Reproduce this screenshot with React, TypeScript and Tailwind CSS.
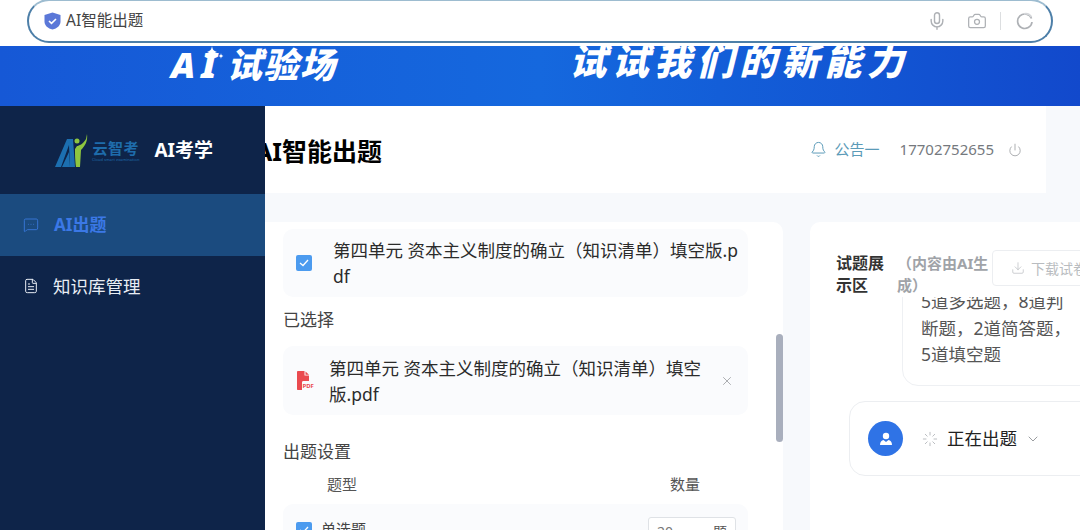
import React from 'react';
import { Bell, ChevronDown, Download, FileText, Loader, Mic, Camera, MessageSquareMore, Power, X } from 'lucide-react';

const FILE_NAME = '第四单元 资本主义制度的确立（知识清单）填空版.pdf';

const ShieldIcon = () => (
  <svg width="17" height="18" viewBox="0 0 17 18">
    <path fill="#5b78d8" d="M8.5 0.5 16.5 3v6.5c0 4-3.4 7-8 8-4.600-1-8-4-8-8V3z" />
    <path fill="none" stroke="#fff" strokeWidth="1.6" d="M5 9l2.500 2.400L12 7" />
  </svg>
);

const ReloadIcon = () => (
  <svg width="18" height="18" viewBox="0 0 18 18" fill="none" stroke="#aeb1b5" strokeWidth="1.700">
    <path d="M15.500 6.500A7.200 7.200 0 1 0 16 10" />
    <path d="M8 1.800c3-.6 6 .6 7.500 3.200" stroke="#d5d7da" />
  </svg>
);

const Sparkle = () => (
  <svg width="24" height="20" viewBox="0 0 24 20" fill="#fff" className="absolute left-[33px] top-[3px]">
    <path d="M8 0c.6 3.600 1.500 4.800 5 6-3.500 1.200-4.400 2.400-5 6-.6-3.600-1.500-4.800-5-6 3.500-1.200 4.400-2.400 5-6z" />
    <path d="M17 7c.3 1.800.7 2.500 2.400 3-1.700.5-2.100 1.200-2.400 3-.3-1.800-.7-2.500-2.400-3 1.700-.5 2.100-1.200 2.400-3z" />
  </svg>
);

const Logo = () => (
  <div className="flex items-center">
    <svg width="36" height="36" viewBox="0 0 36 36" fill="none">
      <path fill="#1c6fb0" d="M0 34 12 6h6l2 28h-5l-1-22-8 22z" />
      <path fill="#1c6fb0" d="M7 34l7-15 1 15z" />
      <path fill="#8ec63f" d="M21 34c-1-8-1-13-1-18l2-3c2 0 6-2 9-7l1-5c1 7-2 12-6 16l-1 17z" />
      <circle cx="22" cy="8" r="2.500" fill="#8ec63f" />
    </svg>
    <div className="ml-px flex flex-col items-center">
      <span className="text-[15px] leading-[18px] font-bold tracking-[0.5px] text-[#1e6cab]">云智考</span>
      <span className="text-[4px] leading-[5px] text-[#1e6cab]">Cloud smart examination</span>
    </div>
  </div>
);

const Checkbox = () => (
  <span className="flex h-[16px] w-[16px] shrink-0 items-center justify-center rounded-[2px] bg-[#4c9bef]">
    <svg width="10" height="8" viewBox="0 0 10 8" fill="none" stroke="#fff" strokeWidth="1.300">
      <path d="M1 4l3 2.500L9 1" />
    </svg>
  </span>
);

const PdfIcon = () => (
  <svg width="19" height="20" viewBox="0 0 19 20" className="shrink-0">
    <path fill="#ea4a4f" d="M0 1c0-.5.4-1 1-1h6.500v4.500H12V10H6.500C5.500 10 5 10.500 5 11.500V19H1c-.6 0-1-.4-1-1z" />
    <path fill="#ea4a4f" d="M8.500 0.500 12 3.800H8.500z" />
    <text x="5.500" y="17" fontSize="6" fontWeight="700" fill="#ea4a4f">PDF</text>
  </svg>
);

const Sidebar = () => (
  <aside className="relative z-10 flex w-[265px] shrink-0 flex-col bg-[#0e2449]">
    <div className="flex h-[88px] shrink-0 items-center pl-[55px] pt-[1px]">
      <Logo />
      <span className="ml-[15px] text-[19px] font-bold text-white">AI考学</span>
    </div>
    <div className="flex h-[62px] shrink-0 items-center gap-[15px] bg-[#1b4b7f] pl-[23px]">
      <MessageSquareMore size={16} strokeWidth={1.300} className="text-[#3a7be0]" />
      <span className="text-[17px] font-bold text-[#3b78e6]">AI出题</span>
    </div>
    <div className="flex h-[60px] shrink-0 items-center gap-[14px] pl-[23px]">
      <FileText size={16} strokeWidth={1.500} className="text-[#e8edf4]" />
      <span className="text-[17.500px] text-[#e8edf4]">知识库管理</span>
    </div>
  </aside>
);

const Header = () => (
  <header className="flex h-[87px] w-[781px] shrink-0 items-center justify-between bg-white pr-[24px]">
    <h1 className="-ml-[10px] mt-[4px] text-[25px] font-bold text-black">AI智能出题</h1>
    <div className="flex items-center text-[#5b9bb8]">
      <Bell size={17} strokeWidth={1.400} />
      <span className="ml-[8px] text-[15px]">公告一</span>
      <span className="ml-[20px] text-[15px] text-[#75797e]">17702752655</span>
      <Power size={14} strokeWidth={1.200} className="ml-[14px] text-[#8a8d91]" />
    </div>
  </header>
);

const LeftPanel = () => (
  <section className="relative flex w-[518px] shrink-0 flex-col overflow-hidden rounded-tr-[10px] bg-white pl-[18px] pt-[7px] text-[#2b2b2b]">
    <div className="flex h-[68px] w-[465px] shrink-0 items-center rounded-[10px] bg-[#fafbfd] pl-[13px] pr-[6px]">
      <Checkbox />
      <p className="ml-[21px] break-all text-[17.500px] leading-[26px]">{FILE_NAME}</p>
    </div>
    <p className="mt-[11px] shrink-0 text-[17px] leading-[24px] text-[#444]">已选择</p>
    <div className="mt-[14px] flex h-[69px] w-[465px] shrink-0 items-center rounded-[10px] bg-[#fafbfd] pl-[14px]">
      <PdfIcon />
      <p className="ml-[13px] w-[380px] shrink-0 text-[17.500px] leading-[26px]">{FILE_NAME}</p>
      <X size={14} strokeWidth={1.200} className="ml-[11px] text-[#8a8d91]" />
    </div>
    <p className="mt-[25px] shrink-0 text-[17px] leading-[24px] text-[#444]">出题设置</p>
    <div className="mt-[8px] flex w-[417px] shrink-0 justify-between pl-[44px] text-[15px] leading-[24px] text-[#555]">
      <span>题型</span>
      <span>数量</span>
    </div>
    <div className="mt-[8px] flex h-[40px] w-[465px] shrink-0 items-start rounded-t-[10px] bg-[#fafbfd] pl-[13px] pt-[18px]">
      <Checkbox />
      <span className="ml-[9px] text-[15px] leading-[15px] text-[#444]">单选题</span>
      <div className="ml-auto mr-[12px] -mt-[5px] flex h-[30px] w-[88px] justify-between rounded-[3px] border border-[#dfe2e6] bg-white px-[8px] pt-[3px] text-[14px] text-[#777]">
        <span>20</span>
        <span className="text-[#555]">题</span>
      </div>
    </div>
    <div className="absolute right-0 top-[112px] h-[108px] w-[7px] rounded-[4px] bg-[#a9afbd]" />
  </section>
);

const RightPanel = () => (
  <section className="flex min-w-0 flex-1 flex-col overflow-hidden rounded-tl-[10px] bg-white">
    <div className="flex h-[75px] shrink-0 pl-[26px] pt-[30px]">
      <h2 className="w-[61px] shrink-0 pr-[10px] text-[16px] leading-[22px] font-bold text-[#333]">试题展示区</h2>
      <p className="w-[95px] shrink-0 text-[15px] leading-[22px] font-bold text-[#a0a3a8]">（内容由AI生成）</p>
      <button className="-mt-[2px] flex h-[36px] w-[120px] shrink-0 items-center gap-[6px] rounded-[4px] border border-[#eceef1] pl-[18px] text-[14px] whitespace-nowrap text-[#b9bcc0]">
        <Download size={14} strokeWidth={1.200} />
        下载试卷
      </button>
    </div>
    <div className="min-h-0 flex-1 overflow-hidden">
      <div className="-mt-[29px] ml-[92px] h-[118px] w-[240px] rounded-bl-[16px] border border-[#eef0f3] pl-[18px] pt-[19px]">
        <p className="w-[152px] text-[17.500px] leading-[26.500px] text-[#555]">5道多选题，8道判断题，2道简答题，5道填空题</p>
      </div>
      <div className="ml-[39px] mt-[15px] flex h-[75px] w-[300px] items-center rounded-l-[16px] border border-[#eceef1] pl-[18px]">
        <span className="flex h-[35px] w-[35px] shrink-0 items-center justify-center rounded-full bg-[#2f73e6]">
          <svg width="14" height="14" viewBox="0 0 14 14" fill="#fff">
            <circle cx="7" cy="4" r="3.200" />
            <path d="M1 13c0-3 1.500-4.500 3.500-5L7 10l2.500-2c2 .5 3.500 2 3.500 5z" />
          </svg>
        </span>
        <Loader size={16} strokeWidth={1.200} className="ml-[19px] shrink-0 text-[#a9adb2]" />
        <span className="ml-[9px] text-[17.500px] whitespace-nowrap text-[#222]">正在出题</span>
        <ChevronDown size={16} strokeWidth={1.300} className="ml-[8px] shrink-0 text-[#8a8d91]" />
      </div>
    </div>
  </section>
);

const App = () => {
  return (
    <div className="flex h-[530px] w-[1080px] flex-col overflow-hidden bg-white font-['Noto_Sans','Noto_Sans_CJK_SC',sans-serif]">
      <div className="relative z-20 h-[46px] shrink-0 bg-white pl-[27px]">
        <div className="-mt-px flex h-[44px] w-[1026px] items-center rounded-full border-2 border-[#4d7fa8] border-t-[#9dbcd0] pl-[15px] pr-[17px]">
          <ShieldIcon />
          <span className="ml-[5px] text-[15.500px] text-[#444]">AI智能出题</span>
          <Mic size={20} strokeWidth={1.700} className="ml-auto text-[#aeb1b5]" />
          <Camera size={20} strokeWidth={1.500} className="ml-[20px] text-[#aeb1b5]" />
          <span className="ml-[13px] h-[18px] w-px bg-[#dcdee0]" />
          <span className="ml-[15px] flex"><ReloadIcon /></span>
        </div>
      </div>

      <div className="flex h-[60px] shrink-0 items-start overflow-hidden bg-gradient-to-r from-[#1658d6] via-[#1568de] to-[#1249cc] italic text-white">
        <span className="relative ml-[171px] mt-[-3px] flex items-baseline font-black leading-[44px]">
          <span className="text-[36px] tracking-[6px]">AI</span>
          <span className="ml-[4px] text-[35px] tracking-[1.500px]">试验场</span>
          <Sparkle />
        </span>
        <span className="ml-[233px] -mt-[9px] text-[37px] leading-[48px] font-black tracking-[5.500px]">试试我们的新能力</span>
      </div>

      <div className="flex min-h-0 flex-1">
        <Sidebar />
        <main className="flex min-w-0 flex-1 flex-col gap-[29px] bg-[#f7f9fc]">
          <Header />
          <div className="flex min-h-0 flex-1 gap-[27px]">
            <LeftPanel />
            <RightPanel />
          </div>
        </main>
      </div>
    </div>
  );
};

export default App;
